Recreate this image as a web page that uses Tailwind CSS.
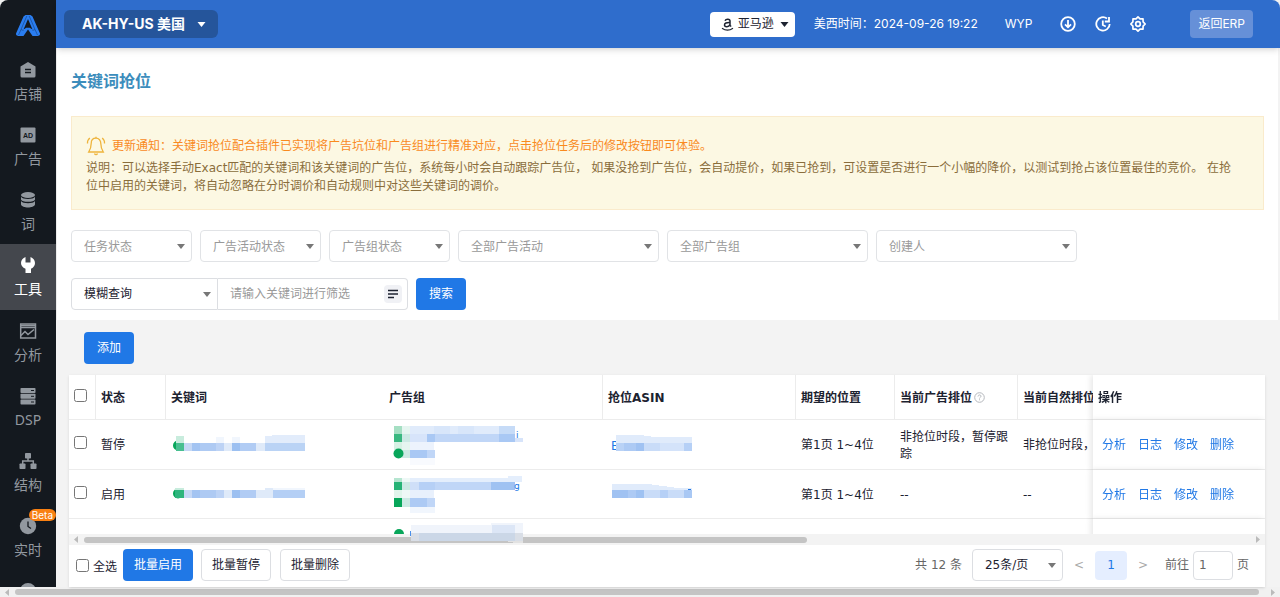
<!DOCTYPE html>
<html lang="zh-CN">
<head>
<meta charset="utf-8">
<title>关键词抢位</title>
<script src="https://cdn.jsdelivr.net/npm/@tailwindcss/browser@4"></script>
</head>
<body class="bg-[#f1f1f1] text-xs text-[#1c2230] font-['DejaVu_Sans','Noto_Sans_CJK_SC',sans-serif]">
<svg class="hidden">
  <symbol id="caret" viewBox="0 0 8 5"><path d="M0 0h8L4 5z" fill="currentColor"/></symbol>
</svg>
<div class="flex h-screen flex-col overflow-hidden rounded-t-lg">
  <div class="flex min-h-0 flex-1">

    <nav class="flex w-14 shrink-0 flex-col overflow-hidden bg-[#14191f] text-sm text-[#92989f]">
      <a href="#" aria-label="首页" class="flex h-[49px] shrink-0 items-center justify-center pt-[2px]">
        <svg class="h-[21px] w-6" viewBox="0 0 24 21"><path d="M9.500 0h5l2 1.500L24 18.500c.3 1.500-1 2.500-2.500 2.500H16l-4-3.500L8 21H2.500C1 21-.3 20 0 18.500L7.500 1.500z" fill="#2a7df0"/><path d="M12 4L7.500 14.500l2.800-1.800h3.400l2.800 1.800z" fill="#14191f"/><path d="M12 14.500L7.500 21h9z" fill="#14191f"/><path d="M10.800 1L5 14.500l2.500 1M13.200 1L19 14.500l-2.500 1M5 14.500L2.500 20M19 14.500l2.500 5.500" stroke="#1a4a8c" stroke-width=".7" fill="none"/></svg>
      </a>
      <a href="#" class="flex h-[65px] shrink-0 flex-col items-center gap-[5px] pt-3"><svg class="size-[18px]" viewBox="0 0 18 18"><path d="M9 1l7.500 4.500V15a1.500 1.500 0 0 1-1.500 1.500H3A1.500 1.500 0 0 1 1.500 15V5.500z" fill="currentColor"/><path d="M6 8.500h6M6 11.500h6" stroke="#14191f" stroke-width="1.300"/></svg><span class="leading-5">店铺</span></a>
      <a href="#" class="flex h-[65px] shrink-0 flex-col items-center gap-[5px] pt-3"><svg class="size-[18px]" viewBox="0 0 18 18"><rect x="1.500" y="1.500" width="15" height="15" rx="1" fill="currentColor"/><text x="9" y="11.500" text-anchor="middle" font-size="7" font-weight="700" font-family="Liberation Sans" fill="#14191f">AD</text></svg><span class="leading-5">广告</span></a>
      <a href="#" class="flex h-[65px] shrink-0 flex-col items-center gap-[5px] pt-3"><svg class="size-[18px]" viewBox="0 0 18 18" fill="currentColor"><ellipse cx="9" cy="4" rx="7" ry="3"/><path d="M2 5.800c1.500 3 12.500 3 14 0v2.600c-1 3.200-13 3.200-14 0z"/><path d="M2 10c1.500 3 12.500 3 14 0v3.600c-1 4-13 4-14 0z"/></svg><span class="leading-5">词</span></a>
      <a href="#" aria-current="page" class="flex h-[66px] shrink-0 flex-col items-center gap-[5px] bg-[#44474d] pt-3 text-white"><svg class="size-[18px]" viewBox="0 0 18 18"><path d="M6.500 1v5.500h5V1C14 1.800 16 4.200 16 7c0 2.500-1.300 4.500-4 5.800V17H6.500v-4.200C3.500 11.500 2 9.500 2 7c0-2.800 2-5.200 4.500-6z" fill="currentColor"/></svg><span class="leading-5">工具</span></a>
      <a href="#" class="flex h-[65px] shrink-0 flex-col items-center gap-[5px] pt-3"><svg class="size-[18px]" viewBox="0 0 18 18" fill="none" stroke="currentColor" stroke-width="1.500"><path d="M1.700 2v14h14.800V2z"/><path d="M1.700 3.500h15M1.700 5.500h15" stroke-width="1.300"/><path d="M2 13.500l4-4 3 3 6-5"/></svg><span class="leading-5">分析</span></a>
      <a href="#" class="flex h-[65px] shrink-0 flex-col items-center gap-[5px] pt-3"><svg class="size-[18px]" viewBox="0 0 18 18"><g fill="currentColor"><rect x="1.500" y="1" width="15" height="5" rx=".8"/><rect x="1.500" y="6.800" width="15" height="5" rx=".8"/><rect x="1.500" y="12.600" width="15" height="5" rx=".8"/></g><path d="M12 3.500h3M12 9.300h3M12 15h3" stroke="#14191f"/></svg><span class="font-['Noto_Sans'] leading-5">DSP</span></a>
      <a href="#" class="flex h-[65px] shrink-0 flex-col items-center gap-[5px] pt-3"><svg class="size-[18px]" viewBox="0 0 18 18" fill="currentColor"><rect x="6" y="1" width="6" height="5.500" rx=".8"/><rect x="0.500" y="11.500" width="6" height="5.500" rx=".8"/><rect x="11.500" y="11.500" width="6" height="5.500" rx=".8"/><path d="M9 5v4M3.700 13V9h10.600v4" fill="none" stroke="currentColor" stroke-width="1.500"/></svg><span class="leading-5">结构</span></a>
      <a href="#" class="relative flex h-[65px] shrink-0 flex-col items-center gap-[5px] pt-3"><svg class="size-[18px]" viewBox="0 0 18 18"><circle cx="9" cy="9" r="8.200" fill="currentColor"/><path d="M9 4.500v5l3 2" fill="none" stroke="#14191f" stroke-width="1.300"/></svg><span class="leading-5">实时</span><span class="absolute top-1 right-0 rounded-full bg-[#f98012] px-[3px] font-[Inter] text-[10px] leading-3 text-white">Beta</span></a>
      <a href="#" aria-label="更多" class="flex shrink-0 justify-center pt-3"><svg class="size-[18px]" viewBox="0 0 18 18"><circle cx="9" cy="9" r="8" fill="currentColor"/></svg></a>
    </nav>

    <main class="flex min-w-0 flex-1 flex-col bg-[#f3f3f3]">
      <header class="z-10 flex h-12 shrink-0 items-center bg-[#2f6dcc] pr-[27px] pl-2 font-[Inter,'Noto_Sans_CJK_SC',sans-serif] text-white shadow-md">
        <button class="flex h-7 items-center gap-3 rounded-md bg-[#25559b] pr-3 pl-[18px] text-sm font-bold">AK-HY-US 美国<svg class="h-[5px] w-[9px]"><use href="#caret"/></svg></button>
        <button class="ml-auto flex h-[25px] items-center rounded bg-white pr-[6px] pl-[11px] text-[#1c2230]"><svg class="mr-1 size-[13px]" viewBox="0 0 13 13" fill="none" stroke="currentColor" stroke-width="1.500"><path d="M4 2.800C5 .5 9 .8 9 3v4.500l1.200 1M9 4.500C5.500 4.300 3.500 5.200 3.500 7s4 2.800 5.500-.5"/><path d="M1 10.200c3.500 2.500 7.500 2.500 11 0" stroke-width="1.200"/></svg>亚马逊<svg class="ml-[6px] h-[5px] w-[9px]"><use href="#caret"/></svg></button>
        <span class="ml-[19px]">美西时间：2024-09-26 19:22</span>
        <span class="ml-[27px]">WYP</span>
        <button aria-label="下载" class="ml-7"><svg class="size-4" viewBox="0 0 16 16" fill="none" stroke="currentColor" stroke-width="1.800"><circle cx="8" cy="8" r="6.800"/><path d="M8 4v7M5 8.300l3 3 3-3"/></svg></button>
        <button aria-label="历史" class="ml-[19px]"><svg class="size-4" viewBox="0 0 16 16" fill="none" stroke="currentColor" stroke-width="1.800"><path d="M12 2.500A6.700 6.700 0 1 0 14.700 8"/><path d="M14 1v4.500H9.800M7.800 4.500V9l3 1.500"/></svg></button>
        <button aria-label="设置" class="ml-[19px]"><svg class="size-4" viewBox="0 0 16 16" fill="none" stroke="currentColor" stroke-width="1.700" stroke-linejoin="round"><path d="M8 .9l2 2 3-.1.100 3L15.200 8l-2.100 2.200-.1 3-3-.1-2 2-2-2-3 .1-.1-3L.8 8l2.100-2.200.1-3 3 .1z"/><circle cx="8" cy="8" r="2.300"/></svg></button>
        <button class="ml-11 h-7 rounded bg-[#6690d8] px-2">返回ERP</button>
      </header>

      <section class="mr-[2px] shrink-0 border-l border-[#ececec] bg-white pr-[14px] pb-[10px] pl-[14px]">
        <h1 class="pt-[22px] text-base leading-6 font-bold text-[#3c8dbc]">关键词抢位</h1>
        <div class="mt-[22px] h-[94px] border border-[#faebcc] bg-[#fcf8e3] pt-[19px] pr-[22px] pl-[14px] leading-[18px] text-[#8a6d3b]">
          <p class="flex items-center text-[#f98a1e]"><svg class="mr-[6px] size-5 shrink-0" viewBox="0 0 20 20" fill="none" stroke="#eeb43d" stroke-width="1.300"><path d="M10 2.200c-3 0-4.800 2.300-4.800 5.300 0 4-1 6-2.500 8.500h14.600c-1.500-2.500-2.500-4.500-2.500-8.500 0-3-1.800-5.300-4.800-5.300z"/><path d="M8.500 17.500c.5 1.500 2.500 1.500 3 0M10 .8v1.400M3.800 2C2 3.500 1.300 5.300 1.500 7.500M16.200 2c1.800 1.500 2.500 3.300 2.300 5.500"/></svg>更新通知：关键词抢位配合插件已实现将广告坑位和广告组进行精准对应，点击抢位任务后的修改按钮即可体验。</p>
          <p class="mt-[3px]">说明：可以选择手动Exact匹配的关键词和该关键词的广告位，系统每小时会自动跟踪广告位， 如果没抢到广告位，会自动提价，如果已抢到，可设置是否进行一个小幅的降价，以测试到抢占该位置最佳的竞价。 在抢位中启用的关键词，将自动忽略在分时调价和自动规则中对这些关键词的调价。</p>
        </div>
        <form class="mt-5">
          <div class="flex gap-2 text-[#999]">
            <div class="relative w-[121px]"><select aria-label="任务状态" class="h-8 w-full appearance-none rounded border border-[#e1e3e6] bg-white px-3 pt-[2px]"><option>任务状态</option></select><svg class="pointer-events-none absolute top-[14px] right-[7px] h-[5px] w-2 text-[#777]"><use href="#caret"/></svg></div>
            <div class="relative w-[121px]"><select aria-label="广告活动状态" class="h-8 w-full appearance-none rounded border border-[#e1e3e6] bg-white px-3 pt-[2px]"><option>广告活动状态</option></select><svg class="pointer-events-none absolute top-[14px] right-[7px] h-[5px] w-2 text-[#777]"><use href="#caret"/></svg></div>
            <div class="relative w-[121px]"><select aria-label="广告组状态" class="h-8 w-full appearance-none rounded border border-[#e1e3e6] bg-white px-3 pt-[2px]"><option>广告组状态</option></select><svg class="pointer-events-none absolute top-[14px] right-[7px] h-[5px] w-2 text-[#777]"><use href="#caret"/></svg></div>
            <div class="relative w-[201px]"><select aria-label="全部广告活动" class="h-8 w-full appearance-none rounded border border-[#e1e3e6] bg-white px-3 pt-[2px]"><option>全部广告活动</option></select><svg class="pointer-events-none absolute top-[14px] right-[7px] h-[5px] w-2 text-[#777]"><use href="#caret"/></svg></div>
            <div class="relative w-[201px]"><select aria-label="全部广告组" class="h-8 w-full appearance-none rounded border border-[#e1e3e6] bg-white px-3 pt-[2px]"><option>全部广告组</option></select><svg class="pointer-events-none absolute top-[14px] right-[7px] h-[5px] w-2 text-[#777]"><use href="#caret"/></svg></div>
            <div class="relative w-[201px]"><select aria-label="创建人" class="h-8 w-full appearance-none rounded border border-[#e1e3e6] bg-white px-3 pt-[2px]"><option>创建人</option></select><svg class="pointer-events-none absolute top-[14px] right-[7px] h-[5px] w-2 text-[#777]"><use href="#caret"/></svg></div>
          </div>
          <div class="mt-4 flex">
            <div class="relative w-[147px]"><select aria-label="查询方式" class="h-8 w-full appearance-none rounded-l border border-[#dcdee2] bg-white px-3"><option>模糊查询</option></select><svg class="pointer-events-none absolute top-[14px] right-[7px] h-[5px] w-2 text-[#777]"><use href="#caret"/></svg></div>
            <div class="flex h-8 w-[190px] items-center rounded-r border border-l-0 border-[#dcdee2] pr-[5px] pl-3">
              <input aria-label="关键词" placeholder="请输入关键词进行筛选" class="min-w-0 flex-1 outline-none placeholder:text-[#999]">
              <button type="button" aria-label="批量输入" class="rounded-sm bg-[#f0f1f5] p-1"><svg class="size-[10px]" viewBox="0 0 10 10" stroke="#1c2230" stroke-width="1.300"><path d="M0 1.500h10M0 5h10M0 8.500h6"/></svg></button>
            </div>
            <button type="button" class="ml-2 h-8 rounded bg-[#2078e6] px-[13px] text-white">搜索</button>
          </div>
        </form>
      </section>

      <section class="flex min-h-0 flex-1 flex-col pr-[15px] pl-[13px]">
        <div class="shrink-0 pt-3 pb-[11px] pl-[15px]"><button class="h-8 rounded bg-[#2078e6] px-[13px] text-white">添加</button></div>
        <div class="relative flex min-h-0 flex-1 flex-col bg-white shadow-sm">
          <div class="min-h-0 flex-1 overflow-hidden">
            <table class="w-[1270px] table-fixed border-separate border-spacing-0 text-left [&_td]:border-b [&_td]:border-[#ececec] [&_td]:px-[5px] [&_td]:leading-[17px] [&_th]:border-b [&_th]:border-[#ececec] [&_th]:px-[5px]">
              <colgroup><col class="w-[27px]"><col class="w-[70px]"><col class="w-[218px]"><col class="w-[219px]"><col class="w-[193px]"><col class="w-[99px]"><col class="w-[123px]"><col class="w-[149px]"><col class="w-[172px]"></colgroup>
              <thead><tr class="h-[45px] font-bold">
                <th class="border-r"><input type="checkbox" aria-label="选择全部" class="mb-1 block size-[13px]"></th>
                <th class="border-r pt-[2px]">状态</th><th class="pt-[2px]">关键词</th><th class="border-r pt-[2px]">广告组</th><th class="border-r pt-[2px]">抢位ASIN</th><th class="border-r pt-[2px]">期望的位置</th>
                <th class="border-r pt-[2px] whitespace-nowrap">当前广告排位<svg class="ml-[2px] inline size-[11px] align-[-1px]" viewBox="0 0 11 11" fill="none" stroke="#b5b8bd"><circle cx="5.500" cy="5.500" r="4.800"/><path d="M4 4.500c0-2 3-2 3-.2 0 1-1.500 1-1.500 2.200M5.500 7.300v1"/></svg></th>
                <th class="pt-[2px]">当前自然排位</th>
                <th class="sticky right-0 bg-white pt-[2px] shadow-[-2px_0_6px_rgba(0,0,0,0.1)]">操作</th>
              </tr></thead>
              <tbody>
                <tr class="h-[50px]">
                  <td><input type="checkbox" aria-label="选择第1行" class="mb-1 block size-[13px]"></td>
                  <td class="pt-[2px]">暂停</td>
                  <td><svg class="block h-5 w-[136px]" viewBox="172 434 136 20" shape-rendering="crispEdges"><circle cx="179" cy="444.500" r="5" fill="#08a65a" shape-rendering="auto"/><path d="M177 435h8v7h-8z" fill="#c8ecdd"/><path d="M177 442h8v8h-8z" fill="#48bf90"/><path d="M185 442h8v8h-8z" fill="#c5d8f5"/><path d="M193 442h8v8h-8z" fill="#a3c4f2"/><path d="M201 442h16v8h-16z" fill="#aecaf3"/><path d="M217 442h8v8h-8z" fill="#bdd3f5"/><path d="M225 442h8v8h-8z" fill="#dfeaf9"/><path d="M233 442h8v8h-8z" fill="#9cc0f1"/><path d="M241 442h16v8h-16z" fill="#b1ccf4"/><path d="M257 442h9v8h-9z" fill="#dfeaf9"/><path d="M266 442h40v8h-40z" fill="#bad3f5"/><path d="M266 435h7v-1h33v8h-40z" fill="#e2ecfb"/><path d="M217 436h8v6h-8zM233 436h8v6h-8z" fill="#f1f6fd"/></svg></td>
                  <td><svg class="block h-11 w-36" viewBox="389 423 144 44" shape-rendering="crispEdges"><path d="M394 426h8v8h-8z" fill="#a5dfc3"/><path d="M394 434h8v8h-8z" fill="#39b880"/><path d="M394 442h8v8h-8z" fill="#d6f1e4"/><path d="M402 426h8v32h-8z" fill="#e5f5f0"/><path d="M402 434h8v8h-8zM402 450h8v8h-8z" fill="#cce9e4"/><circle cx="398.500" cy="453.500" r="5" fill="#08a65a" shape-rendering="auto"/><path d="M410 426h105v8h-105z" fill="#e0ebfb"/><path d="M434 426h16v8h-16zM458 426h16v8h-16z" fill="#d8e6fa"/><path d="M499 426h16v8h-16z" fill="#c6dbf7"/><path d="M410 434h17v8h-17z" fill="#d7e4fa"/><path d="M427 434h8v8h-8z" fill="#a9c8f4"/><path d="M435 434h64v8h-64z" fill="#c0d6f7"/><path d="M499 434h16v8h-16z" fill="#a9c8f4"/><path d="M515 438h8v4h-8z" fill="#d7e4fa"/><path d="M410 442h24v8h-24z" fill="#edf3fd"/><path d="M410 450h24v8h-24z" fill="#a9c8f4"/><path d="M427 450h8v8h-8z" fill="#c0d6f7"/><path d="M410 458h25v7h-25z" fill="#f8fafe"/><text x="516" y="438" font-size="9" fill="#2078e6">i</text></svg></td>
                  <td><svg class="block h-5 w-[90px]" viewBox="608 434 90 20" shape-rendering="crispEdges"><text x="611" y="449" font-size="12" fill="#2078e6">B</text><path d="M616 434h24l14 2h38v6h-76z" fill="#e0ebfb"/><path d="M616 442h8v8h-8z" fill="#b9d2f6"/><path d="M624 442h12v8h-12z" fill="#adcaf4"/><path d="M636 442h8v8h-8z" fill="#a0c2f2"/><path d="M644 442h16v8h-16z" fill="#c9dcf8"/><path d="M660 442h24v8h-24z" fill="#d4e3fa"/><path d="M684 442h8v8h-8z" fill="#b6d0f6"/></svg></td>
                  <td class="pt-[2px] whitespace-nowrap">第1页 1~4位</td><td class="pt-[2px]">非抢位时段，暂停跟踪</td><td class="pt-[2px]">非抢位时段，</td>
                  <td class="sticky right-0 bg-white pt-[2px] shadow-[-2px_0_6px_rgba(0,0,0,0.1)]"><div class="flex gap-3 pl-1 text-[#2078e6]"><a href="#">分析</a><a href="#">日志</a><a href="#">修改</a><a href="#">删除</a></div></td>
                </tr>
                <tr class="h-[49px]">
                  <td><input type="checkbox" aria-label="选择第2行" class="mb-1 block size-[13px]"></td>
                  <td class="pt-[2px]">启用</td>
                  <td><svg class="block h-5 w-[136px]" viewBox="172 484 136 20" shape-rendering="crispEdges"><circle cx="179" cy="493.500" r="5" fill="#08a65a" shape-rendering="auto"/><path d="M176 488h9v2h-9z" fill="#c8ecdd"/><path d="M176 490h9v8h-9z" fill="#2eb57d"/><path d="M185 490h8v8h-8z" fill="#c5d8f5"/><path d="M193 490h8v8h-8z" fill="#a3c4f2"/><path d="M201 490h16v8h-16z" fill="#aecaf3"/><path d="M217 490h8v8h-8z" fill="#bdd3f5"/><path d="M225 490h8v8h-8z" fill="#dfeaf9"/><path d="M233 490h8v8h-8z" fill="#9cc0f1"/><path d="M241 490h16v8h-16z" fill="#b1ccf4"/><path d="M257 490h17v8h-17zM266 488h8v2h-8z" fill="#dfeaf9"/><path d="M274 490h32v8h-32z" fill="#b4cff5"/><path d="M274 488h32v2h-32z" fill="#f1f6fd"/></svg></td>
                  <td><svg class="block h-11 w-36" viewBox="389 472 144 44" shape-rendering="crispEdges"><path d="M394 478h8v4h-8z" fill="#b5e5d0"/><path d="M394 482h8v8h-8z" fill="#27b376"/><path d="M394 490h8v8h-8z" fill="#e0f4eb"/><path d="M394 498h8v9h-8z" fill="#08a65a"/><path d="M402 478h8v29h-8z" fill="#eef8f6"/><path d="M402 482h8v8h-8zM402 498h8v9h-8z" fill="#cce9e4"/><path d="M410 478h98v-2h14v6h-112z" fill="#e4eefc"/><path d="M410 482h9v8h-9z" fill="#cfdff8"/><path d="M419 482h16v8h-16z" fill="#b6d0f6"/><path d="M435 482h56v8h-56z" fill="#c0d6f7"/><path d="M491 482h24v8h-24z" fill="#9fc2f2"/><path d="M410 490h24v8h-24z" fill="#e8f0fc"/><path d="M410 498h24v9h-24z" fill="#adcaf4"/><path d="M427 498h8v9h-8z" fill="#c0d6f7"/><path d="M410 507h25v6h-25z" fill="#f1f6fd"/><text x="514" y="489" font-size="9" fill="#2078e6">g</text></svg></td>
                  <td><svg class="block h-5 w-[90px]" viewBox="608 484 90 20" shape-rendering="crispEdges"><path d="M612 484h36l30 4h14v3h-80z" fill="#e0ebfb"/><path d="M612 490h80v8h-80z" fill="#c9dcf8"/><path d="M612 490h16v8h-16z" fill="#a0c2f2"/><path d="M628 490h8v8h-8z" fill="#adcaf4"/><path d="M636 490h8v8h-8z" fill="#9fc2f2"/><path d="M660 490h8v8h-8z" fill="#b6d0f6"/><path d="M684 490h8v8h-8z" fill="#a9c8f4"/><path d="M688 489h3v1h-3z" fill="#2078e6"/></svg></td>
                  <td class="pt-[2px] whitespace-nowrap">第1页 1~4位</td><td class="pt-[2px]">--</td><td class="pt-[2px]">--</td>
                  <td class="sticky right-0 bg-white pt-[2px] shadow-[-2px_0_6px_rgba(0,0,0,0.1)]"><div class="flex gap-3 pl-1 text-[#2078e6]"><a href="#">分析</a><a href="#">日志</a><a href="#">修改</a><a href="#">删除</a></div></td>
                </tr>
                <tr class="h-[49px]">
                  <td></td><td></td><td></td><td class="align-top"><svg class="mt-[10px] block h-5 w-4" viewBox="0 0 16 20"><circle cx="10" cy="5" r="5" fill="#08a65a"/></svg></td><td></td><td></td><td></td><td></td>
                  <td class="sticky right-0 bg-white shadow-[-2px_0_6px_rgba(0,0,0,0.1)]"></td>
                </tr>
              </tbody>
            </table>
          </div>
          <svg class="absolute top-[148px] left-[341px] z-10 h-5 w-[114px]" viewBox="0 0 114 20" shape-rendering="crispEdges"><path d="M0 8h3v5H0z" fill="#4a90ea"/><path d="M1 2h80V0h32v10H1z" fill="#f0f4fb"/><path d="M82 2h23v8H82z" fill="#dce6f6"/><path d="M1 10h112v8H1z" fill="#cbd7e7"/><path d="M1 10h8v8H1zM105 10h8v8h-8z" fill="#d9dee6"/><path d="M1 18h94l10 2h8v-2z" fill="#e2e2e2"/></svg>
          <div class="flex h-[11px] shrink-0 items-center bg-[#f3f3f3] px-[5px] text-[#bbb]">
            <svg class="h-[7px] w-1" viewBox="0 0 4 7"><path d="M4 0v7L0 3.500z" fill="currentColor"/></svg>
            <div class="ml-[6px] h-[6px] w-[61%] rounded-full bg-[#c4c4c4]"></div>
            <svg class="ml-auto h-[7px] w-1" viewBox="0 0 4 7"><path d="M0 0v7l4-3.500z" fill="currentColor"/></svg>
          </div>
          <div class="flex h-[42px] shrink-0 items-center pr-4 pb-[2px] pl-[7px]">
            <label class="flex items-center gap-1"><input type="checkbox" class="size-[13px]"><span class="pt-1">全选</span></label>
            <button class="ml-[6px] h-8 rounded bg-[#2078e6] px-[11px] text-white">批量启用</button>
            <button class="ml-2 h-8 rounded border border-[#dcdee2] px-[10px]">批量暂停</button>
            <button class="ml-[9px] h-8 rounded border border-[#dcdee2] px-[10px]">批量删除</button>
            <div class="ml-auto flex items-center text-[#666]">
              <span>共 12 条</span>
              <div class="relative ml-[10px] w-[91px]"><select aria-label="每页条数" class="h-8 w-full appearance-none rounded border border-[#dcdee2] bg-white px-3 text-[#1c2230]"><option>25条/页</option></select><svg class="pointer-events-none absolute top-[14px] right-[7px] h-[5px] w-2 text-[#777]"><use href="#caret"/></svg></div>
              <button aria-label="上一页" class="w-8 text-[#aaa]">&lt;</button>
              <button class="h-[29px] w-8 rounded bg-[#e5eeff] text-[#2078e6]">1</button>
              <button aria-label="下一页" class="w-8 text-[#aaa]">&gt;</button>
              <label class="ml-[6px] flex items-center gap-1">前往<input value="1" class="h-[29px] w-10 rounded border border-[#dcdee2] px-[5px]">页</label>
            </div>
          </div>
        </div>
      </section>
    </main>
  </div>
  <div class="flex h-[10px] shrink-0 items-center bg-[#f1f1f1] px-[5px] text-[#bbb]">
    <svg class="h-[7px] w-1" viewBox="0 0 4 7"><path d="M4 0v7L0 3.500z" fill="currentColor"/></svg>
    <div class="mx-[6px] mr-3 h-[6px] flex-1 rounded-full bg-[#c4c4c4]"></div>
    <svg class="h-[7px] w-1" viewBox="0 0 4 7"><path d="M0 0v7l4-3.500z" fill="currentColor"/></svg>
  </div>
</div>
</body>
</html>
